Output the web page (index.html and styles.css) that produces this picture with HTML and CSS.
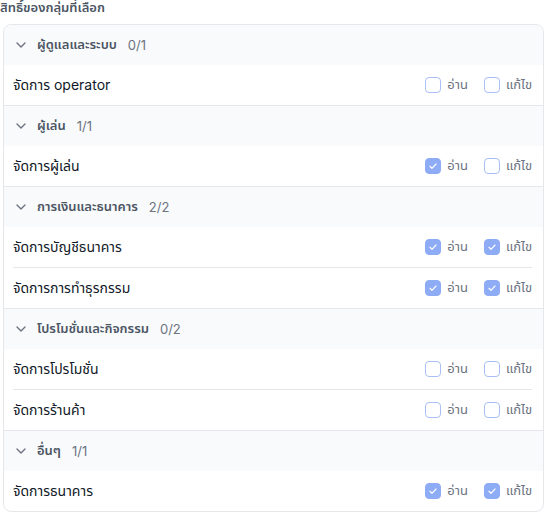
FILE: index.html
```html
<!DOCTYPE html>
<html lang="th">
<head>
<meta charset="utf-8">
<link rel="stylesheet" href="styles.css">
</head>
<body>
<div class="page">
  <div class="title">สิทธิ์ของกลุ่มที่เลือก</div>
  <div class="card">
    <div class="group">
      <div class="group-head"><svg class="chev" viewBox="0 0 10 6"><path d="M1 1l4 4 4-4"/></svg><span class="gname">ผู้ดูแลและระบบ</span><span class="gcount">0/1</span></div>
      <div class="item"><span class="iname">จัดการ operator</span><div class="perms"><label class="perm"><span class="box"></span>อ่าน</label><label class="perm"><span class="box"></span>แก้ไข</label></div></div>
    </div>
    <div class="group">
      <div class="group-head"><svg class="chev" viewBox="0 0 10 6"><path d="M1 1l4 4 4-4"/></svg><span class="gname">ผู้เล่น</span><span class="gcount">1/1</span></div>
      <div class="item"><span class="iname">จัดการผู้เล่น</span><div class="perms"><label class="perm"><span class="box on"><svg viewBox="0 0 16 16"><path d="M4.5 8.3l2.3 2.3 4.7-4.9"/></svg></span>อ่าน</label><label class="perm"><span class="box"></span>แก้ไข</label></div></div>
    </div>
    <div class="group">
      <div class="group-head"><svg class="chev" viewBox="0 0 10 6"><path d="M1 1l4 4 4-4"/></svg><span class="gname">การเงินและธนาคาร</span><span class="gcount">2/2</span></div>
      <div class="item"><span class="iname">จัดการบัญชีธนาคาร</span><div class="perms"><label class="perm"><span class="box on"><svg viewBox="0 0 16 16"><path d="M4.5 8.3l2.3 2.3 4.7-4.9"/></svg></span>อ่าน</label><label class="perm"><span class="box on"><svg viewBox="0 0 16 16"><path d="M4.5 8.3l2.3 2.3 4.7-4.9"/></svg></span>แก้ไข</label></div></div>
      <div class="item"><span class="iname">จัดการการทำธุรกรรม</span><div class="perms"><label class="perm"><span class="box on"><svg viewBox="0 0 16 16"><path d="M4.5 8.3l2.3 2.3 4.7-4.9"/></svg></span>อ่าน</label><label class="perm"><span class="box on"><svg viewBox="0 0 16 16"><path d="M4.5 8.3l2.3 2.3 4.7-4.9"/></svg></span>แก้ไข</label></div></div>
    </div>
    <div class="group">
      <div class="group-head"><svg class="chev" viewBox="0 0 10 6"><path d="M1 1l4 4 4-4"/></svg><span class="gname">โปรโมชั่นและกิจกรรม</span><span class="gcount">0/2</span></div>
      <div class="item"><span class="iname">จัดการโปรโมชั่น</span><div class="perms"><label class="perm"><span class="box"></span>อ่าน</label><label class="perm"><span class="box"></span>แก้ไข</label></div></div>
      <div class="item"><span class="iname">จัดการร้านค้า</span><div class="perms"><label class="perm"><span class="box"></span>อ่าน</label><label class="perm"><span class="box"></span>แก้ไข</label></div></div>
    </div>
    <div class="group">
      <div class="group-head"><svg class="chev" viewBox="0 0 10 6"><path d="M1 1l4 4 4-4"/></svg><span class="gname">อื่นๆ</span><span class="gcount">1/1</span></div>
      <div class="item"><span class="iname">จัดการธนาคาร</span><div class="perms"><label class="perm"><span class="box on"><svg viewBox="0 0 16 16"><path d="M4.5 8.3l2.3 2.3 4.7-4.9"/></svg></span>อ่าน</label><label class="perm"><span class="box on"><svg viewBox="0 0 16 16"><path d="M4.5 8.3l2.3 2.3 4.7-4.9"/></svg></span>แก้ไข</label></div></div>
    </div>
  </div>
</div>
</body>
</html>
```
FILE: styles.css
```css
* { box-sizing: border-box; }
html, body { margin: 0; padding: 0; background: #fff; }
body { font-family: Inter, "Noto Sans Thai", "Noto Sans", sans-serif; color: #111827; }
.page { width: 544px; }
.title {
  height: 16px;
  line-height: 14px;
  font-size: 13px;
  font-weight: 600;
  color: #4b5563;
  margin-bottom: 8px;
}
.card {
  margin-left: 3px;
  width: 541px;
  border: 1px solid #e5e7eb;
  border-radius: 8px;
  overflow: hidden;
}
.group { border-bottom: 1px solid #e5e7eb; }
.group:last-child { border-bottom: none; }
.group-head {
  height: 40px;
  background: #f9fafb;
  display: flex;
  align-items: center;
  padding-left: 12px;
  font-size: 13px;
  color: #6b7280;
}
.chev {
  width: 10px;
  height: 6px;
  margin-right: 11px;
  fill: none;
  stroke: #6b7280;
  stroke-width: 1.4;
  stroke-linecap: round;
  stroke-linejoin: round;
}
.gname { font-weight: 600; color: #4b5563; margin-right: 11px; }
.gcount { font-weight: 400; }
.item {
  height: 40px;
  margin: 0 11px 0 9px;
  display: flex;
  align-items: center;
  justify-content: space-between;
}
.item + .item { border-top: 1px solid #e5e7eb; height: 41px; }
.iname { font-size: 14px; color: #111827; }
.perms { display: flex; gap: 16px; }
.perm {
  display: flex;
  align-items: center;
  gap: 6px;
  font-size: 13px;
  color: #6b7280;
}
.box {
  width: 16px;
  height: 16px;
  border: 1px solid #a9bff6;
  border-radius: 4px;
  background: #fff;
  display: flex;
}
.box.on { background: #8eabf5; border-color: #8eabf5; }
.box svg {
  width: 14px;
  height: 14px;
  fill: none;
  stroke: #fff;
  stroke-width: 1.3;
  stroke-linecap: round;
  stroke-linejoin: round;
}
```
